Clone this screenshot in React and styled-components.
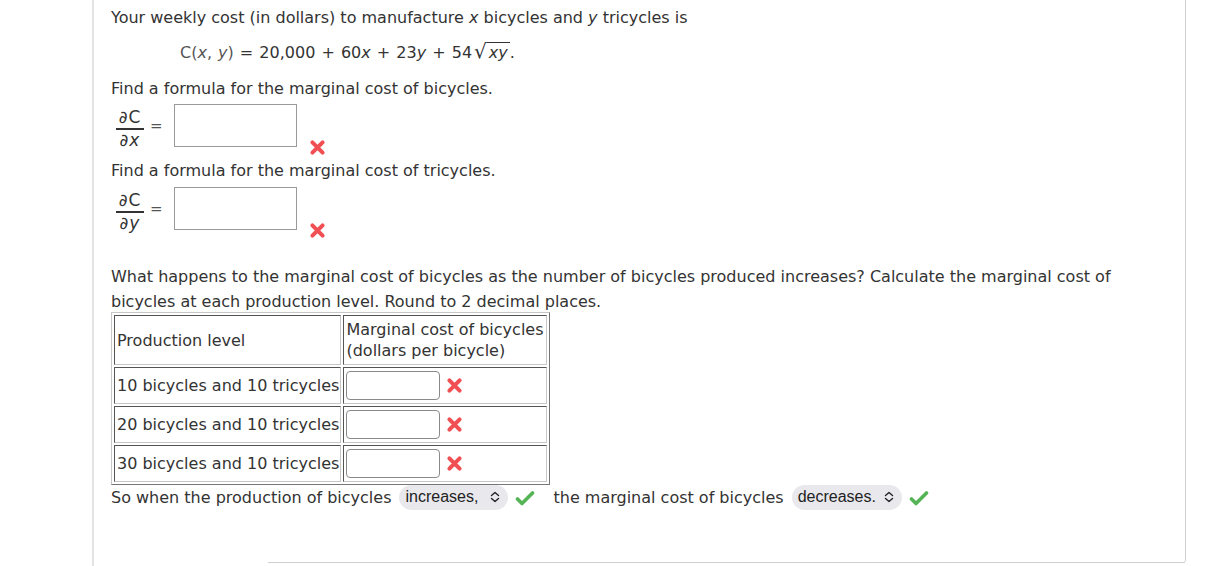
import styled, { createGlobalStyle } from "styled-components";

const GlobalStyle = createGlobalStyle`
    html, body {
        margin: 0;
        padding: 0;
        background: #fff;
    }
    body {
        font-family: "DejaVu Sans", Verdana, sans-serif;
        color: #333;
        overflow: hidden;
    }
`;

const CrossIcon = ({ size = 16 }) => (
    <svg width={size} height={size} viewBox="0 0 16 16">
        <path
            d="M3.2 3.2 L12.8 12.8 M12.8 3.2 L3.2 12.8"
            stroke="#f05053"
            strokeWidth="3.8"
            strokeLinecap="round"
        />
    </svg>
);

const CheckIcon = () => (
    <svg width="20" height="16" viewBox="0 0 20 16">
        <path
            d="M2.5 9 L7 13.5 L17.5 3"
            fill="none"
            stroke="#55b455"
            strokeWidth="3.6"
            strokeLinecap="round"
            strokeLinejoin="round"
        />
    </svg>
);

const Chevrons = () => (
    <svg width="10" height="12" viewBox="0 0 10 12">
        <path
            d="M1.5 4.5 L5 1.5 L8.5 4.5 M1.5 7.5 L5 10.5 L8.5 7.5"
            fill="none"
            stroke="#222"
            strokeWidth="1.4"
            strokeLinecap="round"
            strokeLinejoin="round"
        />
    </svg>
);

const Fraction = ({ num, den }) => (
    <Frac>
        <FracPart>{num}</FracPart>
        <FracBar />
        <FracPart>{den}</FracPart>
    </Frac>
);

const DerivativeRow = ({ variable, top }) => (
    <Derivative $top={top}>
        <Fraction num="∂C" den={<>∂<i>{variable}</i></>} />
        <Equals>=</Equals>
        <AnswerBox />
        <Mark>
            <CrossIcon size={17} />
        </Mark>
    </Derivative>
);

const rows = [
    "10 bicycles and 10 tricycles",
    "20 bicycles and 10 tricycles",
    "30 bicycles and 10 tricycles",
];

const App = () => {
    return (
        <>
            <GlobalStyle />
            <Page>
                <Panel>
                    <Content>
                        <Paragraph>
                            Your weekly cost (in dollars) to manufacture <i>x</i> bicycles and <i>y</i> tricycles is
                        </Paragraph>

                        <Formula>
                            <Light>C(<i>x</i>, <i>y</i>)</Light> = 20,000 + 60<i>x</i> + 23<i>y</i> + 54
                            <Root>√</Root>
                            <Radicand><i>xy</i></Radicand>.
                        </Formula>

                        <Paragraph $top="14px">Find a formula for the marginal cost of bicycles.</Paragraph>
                        <DerivativeRow variable="x" top="4px" />

                        <Paragraph $top="13px">Find a formula for the marginal cost of tricycles.</Paragraph>
                        <DerivativeRow variable="y" top="5px" />

                        <Paragraph $top="34px" $lh="25px">
                            What happens to the marginal cost of bicycles as the number of bicycles produced increases? Calculate the marginal cost of bicycles at each production level. Round to 2 decimal places.
                        </Paragraph>

                        <Table>
                            <tbody>
                                <tr>
                                    <HeadCell $w="218px">Production level</HeadCell>
                                    <HeadCell>
                                        Marginal cost of bicycles<br />(dollars per bicycle)
                                    </HeadCell>
                                </tr>
                                {rows.map((row) => (
                                    <tr key={row}>
                                        <Cell>{row}</Cell>
                                        <Cell>
                                            <CellInner>
                                                <SmallInput />
                                                <CrossIcon size={17} />
                                            </CellInner>
                                        </Cell>
                                    </tr>
                                ))}
                            </tbody>
                        </Table>

                        <Sentence>
                            <span>So when the production of bicycles</span>
                            <Select $w="109px">increases, <Chevrons /></Select>
                            <CheckSlot><CheckIcon /></CheckSlot>
                            <span>the marginal cost of bicycles</span>
                            <Select $w="110px">decreases. <Chevrons /></Select>
                            <CheckSlot><CheckIcon /></CheckSlot>
                        </Sentence>
                    </Content>
                    <BottomEdge />
                </Panel>
            </Page>
        </>
    );
};

export default App;

const Page = styled.div`
    margin-left: 92px;
    width: 1094px;
    height: 566px;
    border-left: 2px solid #e3e3e3;
    box-sizing: border-box;
`;

const Panel = styled.div`
    height: 563px;
    display: flex;
    flex-direction: column;
    border-right: 1px solid #cfcfcf;
    border-bottom-right-radius: 4px;
    box-sizing: border-box;
`;

const Content = styled.div`
    flex: 1;
    padding: 7px 0 0 17px;
    font-size: 16px;
`;

const BottomEdge = styled.div`
    margin-left: 174px;
    border-bottom: 1px solid #cfcfcf;
    border-bottom-right-radius: 4px;
`;

const Paragraph = styled.div`
    margin-top: ${props => props.$top || "0"};
    line-height: ${props => props.$lh || "22px"};
    width: 1010px;
`;

const Formula = styled.div`
    margin: 11px 0 0 69px;
    line-height: 22px;
    display: flex;
    align-items: baseline;
    white-space: pre;
    word-spacing: 1px;
`;

const Light = styled.span`
    color: #555;
`;

const Root = styled.span`
    margin-left: 2px;
    font-size: 20px;
`;

const Radicand = styled.span`
    border-top: 1px solid #333;
    padding: 1px 2px 0 2px;
    line-height: 18px;
`;

const Derivative = styled.div`
    display: flex;
    align-items: center;
    margin: ${props => props.$top} 0 0 5px;
    height: 43px;
`;

const Frac = styled.div`
    display: inline-flex;
    flex-direction: column;
    align-items: center;
    width: 28px;
    margin-top: 7px;
`;

const FracPart = styled.span`
    line-height: 19px;
    font-size: 17px;
    letter-spacing: 1px;
`;

const FracBar = styled.div`
    width: 100%;
    height: 1.5px;
    margin: 1px 0;
    background: #333;
`;

const Equals = styled.span`
    margin: 0 11px 0 6px;
    font-size: 15px;
    color: #555;
`;

const AnswerBox = styled.div`
    width: 121px;
    height: 41px;
    border: 1px solid #9a9a9a;
`;

const Mark = styled.span`
    display: inline-flex;
    align-self: flex-end;
    margin-left: 12px;
    margin-bottom: -9px;
`;

const Table = styled.table`
    margin-top: -2px;
    border-collapse: separate;
    border-spacing: 2px;
    border: 1px solid;
    border-color: #c6c6c6 #777 #777 #c6c6c6;
    font-size: 16px;
`;

const Cell = styled.td`
    border: 1px solid;
    border-color: #555 #c6c6c6 #c6c6c6 #555;
    padding: 3px 1px 3px 2px;
    height: 29px;
    white-space: nowrap;

    & + & {
        padding: 3px 2px 3px 2px;
    }
`;

const HeadCell = styled(Cell)`
    width: ${props => props.$w || "auto"};
    height: 44px;
    line-height: 21px;
    padding-top: 2px;
    padding-bottom: 2px;

    & + & {
        padding-top: 2px;
        padding-bottom: 2px;
    }
`;

const CellInner = styled.div`
    display: flex;
    align-items: center;
    gap: 6px;
`;

const SmallInput = styled.div`
    width: 92px;
    height: 27px;
    border: 1px solid #8a8a8a;
    border-radius: 4px;
`;

const Sentence = styled.div`
    display: flex;
    align-items: center;
    margin-top: -2px;
    height: 28px;
    white-space: nowrap;
`;

const Select = styled.span`
    display: inline-flex;
    align-items: center;
    justify-content: space-between;
    box-sizing: border-box;
    width: ${props => props.$w};
    margin-left: 8px;
    height: 25px;
    padding: 0 8px 0 6px;
    border-radius: 13px;
    background: #e9e9ed;
    font-family: "Liberation Sans", Arial, sans-serif;
    font-size: 16px;
    color: #222;
`;

const CheckSlot = styled.span`
    display: inline-flex;
    margin: 2px 18px 0 7px;
`;
